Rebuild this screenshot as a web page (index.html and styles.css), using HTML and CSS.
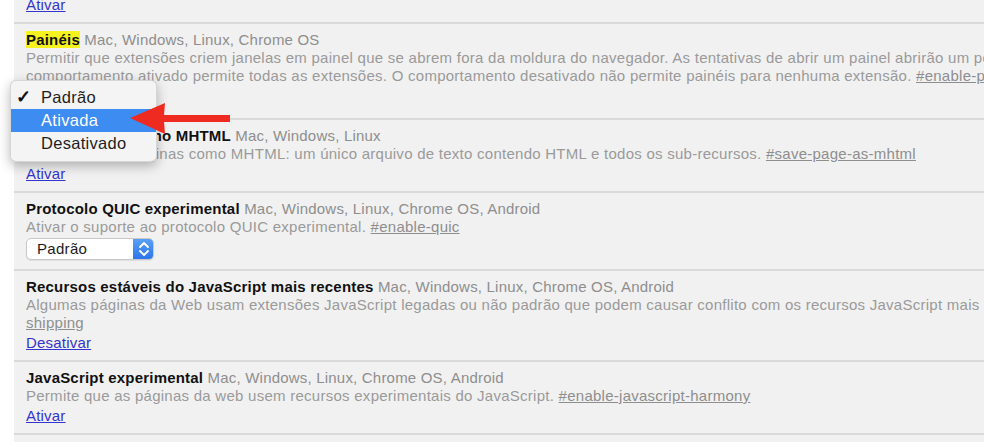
FILE: index.html
```html
<!DOCTYPE html>
<html lang="pt">
<head>
<meta charset="utf-8">
<title>Flags</title>
<link rel="stylesheet" href="styles.css">
</head>
<body>
<main class="page">
  <section class="flag first">
    <a class="act" href="#">Ativar</a>
  </section>

  <section class="flag">
    <div class="title"><span class="name hl">Painéis</span> <span class="plat">Mac, Windows, Linux, Chrome OS</span></div>
    <div class="desc">Permitir que extensões criem janelas em painel que se abrem fora da moldura do navegador. As tentativas de abrir um painel abrirão um pop-up se o recurso não estiver ativado. O comportamento padrão é permitir apenas extensões da lista de permissões. O<br>comportamento ativado permite todas as extensões. O comportamento desativado não permite painéis para nenhuma extensão. <a class="ref" href="#">#enable-panels</a></div>
    <div class="select"><span class="sel-text">Padrão</span><span class="stepper"><svg viewBox="0 0 20 22" width="20" height="22"><path d="M6 9 L10 5 L14 9 M6 13 L10 17 L14 13" fill="none" stroke="#fff" stroke-width="1.8" stroke-linecap="round" stroke-linejoin="round"/></svg></span></div>
  </section>

  <section class="flag">
    <div class="title"><span class="name">Salvar página como MHTML</span> <span class="plat">Mac, Windows, Linux</span></div>
    <div class="desc">Permite salvar páginas como MHTML: um único arquivo de texto contendo HTML e todos os sub-recursos. <a class="ref" href="#">#save-page-as-mhtml</a></div>
    <a class="act" href="#">Ativar</a>
  </section>

  <section class="flag">
    <div class="title"><span class="name">Protocolo QUIC experimental</span> <span class="plat">Mac, Windows, Linux, Chrome OS, Android</span></div>
    <div class="desc">Ativar o suporte ao protocolo QUIC experimental. <a class="ref" href="#">#enable-quic</a></div>
    <div class="select"><span class="sel-text">Padrão</span><span class="stepper"><svg viewBox="0 0 20 22" width="20" height="22"><path d="M6 9 L10 5 L14 9 M6 13 L10 17 L14 13" fill="none" stroke="#fff" stroke-width="1.8" stroke-linecap="round" stroke-linejoin="round"/></svg></span></div>
  </section>

  <section class="flag">
    <div class="title"><span class="name">Recursos estáveis do JavaScript mais recentes</span> <span class="plat">Mac, Windows, Linux, Chrome OS, Android</span></div>
    <div class="desc">Algumas páginas da Web usam extensões JavaScript legadas ou não padrão que podem causar conflito com os recursos JavaScript mais recentes. Esta sinalização permite desativar o suporte a esses recursos. <a class="ref" href="#">#disable-javascript-harmony-</a><br><a class="ref" href="#">shipping</a></div>
    <a class="act" href="#">Desativar</a>
  </section>

  <section class="flag">
    <div class="title"><span class="name">JavaScript experimental</span> <span class="plat">Mac, Windows, Linux, Chrome OS, Android</span></div>
    <div class="desc">Permite que as páginas da web usem recursos experimentais do JavaScript. <a class="ref" href="#">#enable-javascript-harmony</a></div>
    <a class="act" href="#">Ativar</a>
  </section>

  <section class="flag">
    <div class="title"><span class="name">Ocultar</span></div>
  </section>
</main>

<div class="menu">
  <div class="item"><span class="check">✓</span>Padrão</div>
  <div class="item active">Ativada</div>
  <div class="item">Desativado</div>
</div>

<svg class="arrow" viewBox="0 0 102 34" width="102" height="34">
  <polygon points="1,17 36,2 35,14 101,14 101,21 35,21 36,33" fill="#ee2a21"/>
</svg>
</body>
</html>
```

FILE: styles.css
```css
html, body {
  margin: 0;
  padding: 0;
  background: #ffffff;
  overflow: hidden;
  height: 442px;
}

body {
  position: relative;
  font-family: "Liberation Sans", Arial, Helvetica, sans-serif;
  font-size: 15px;
  line-height: 18px;
  letter-spacing: 0.2px;
  color: #000;
}

.page {
  margin: -4px 0 0 14px;
  background: #f1f1f1;
  padding-left: 12px;
  min-height: 460px;
}

.flag {
  display: flex;
  flex-direction: column;
  align-items: flex-start;
  padding: 7px 0 8px;
  border-bottom: 2px solid #dadada;
  margin-left: -12px;
  padding-left: 12px;
  white-space: nowrap;
}

.flag.first {
  padding-top: 0;
}

.title {
  height: 18px;
}

.name {
  font-weight: bold;
  color: #111;
}

.hl {
  background: #f6f31f;
}

.plat {
  color: #8e8e8e;
}

.desc {
  color: #9a9a9a;
  letter-spacing: 0.26px;
}

.ref {
  color: #8e8e8e;
  text-decoration: underline;
}

.act {
  color: #3434cf;
  text-decoration: underline;
  margin-top: 2px;
}

.flag.first .act {
  margin-top: 0;
}

.select {
  margin: 2px 0 1px;
  width: 128px;
  height: 22px;
  box-sizing: border-box;
  display: flex;
  align-items: stretch;
  background: #fff;
  border: 1px solid #c8c8c8;
  border-radius: 5px;
  box-shadow: 0 1px 1px rgba(0, 0, 0, 0.08);
  overflow: hidden;
  letter-spacing: 0.3px;
}

.sel-text {
  flex: 1;
  padding-left: 10px;
  line-height: 20px;
  color: #1a1a1a;
}

.stepper {
  width: 21px;
  display: flex;
  align-items: center;
  justify-content: center;
  background: linear-gradient(#5aa2f6, #2c74ea);
  margin: -1px -1px -1px 0;
}

.menu {
  position: absolute;
  left: 10px;
  top: 80px;
  width: 147px;
  padding: 5px 0 6px;
  box-sizing: border-box;
  background: #f4f4f4;
  border: 1px solid rgba(0, 0, 0, 0.12);
  border-radius: 6px;
  box-shadow: 0 4px 12px rgba(0, 0, 0, 0.28);
  font-size: 16.5px;
  letter-spacing: 0.3px;
}

.item {
  height: 23px;
  line-height: 23px;
  padding-left: 30px;
  color: #1e1e1e;
  position: relative;
}

.item.active {
  background: #3d8cf2;
  color: #fff;
}

.check {
  position: absolute;
  left: 5px;
  top: 0;
  font-size: 18px;
  font-weight: bold;
  color: #111;
}

.arrow {
  position: absolute;
  left: 129px;
  top: 101px;
}
```
